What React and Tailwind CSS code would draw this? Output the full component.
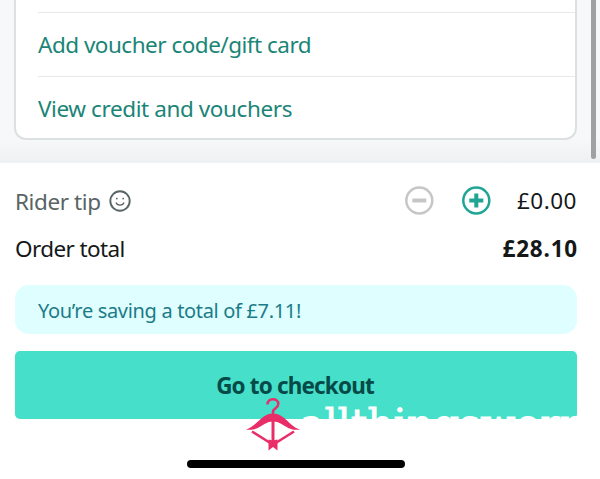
function SmileyIcon() {
  return (
    <svg width="22" height="22" viewBox="0 0 22 22" fill="none" stroke="#596465" aria-hidden="true">
      <circle cx="11" cy="11" r="9.7" strokeWidth="1.9" />
      <path d="M7 12.5c1 3.4 7 3.4 8 0" strokeWidth="1.2" />
      <circle cx="7.8" cy="8.6" r="0.9" fill="#596465" stroke="none" />
      <circle cx="14.2" cy="8.6" r="0.9" fill="#596465" stroke="none" />
    </svg>
  );
}

function StepIcon({ plus }) {
  return (
    <svg width="30" height="30" viewBox="0 0 30 30" fill="none" stroke="currentColor" aria-hidden="true">
      <circle cx="15.3" cy="14.5" r="13" strokeWidth="2.5" />
      <path d={plus ? 'M8.3 14.5h14M15.3 7.5v14' : 'M8.3 14.5h14'} strokeWidth="4" />
    </svg>
  );
}

function HangerBow() {
  return (
    <svg width="54" height="56" viewBox="0 0 54 56" fill="none" stroke="#e92d69" aria-hidden="true">
      <path d="M21.5 8.5C21.5 1.5 32.5 1.5 32.3 8c-.2 4.5-5.3 4-5.3 8v3" strokeWidth="2.5" />
      <path
        d="M0 33.5c6-1.500 11-7.500 16.500-12 6.500-5.300 14.500-5.300 21 0C43 26 48 32 54 33.500c-8 1.300-12-1.500-18.500-5.500-5.500-3.300-11.500-3.300-17 0C12 32 8 34.800 0 33.500Z"
        fill="#e92d69"
        stroke="none"
      />
      <path d="M27 24v22" strokeWidth="3" />
      <path d="M6 35.500l17.500 11M48 35.500L30.500 46.500" strokeWidth="2.600" />
      <path d="M22.500 43.500l4.500 1 4.500-1v11l-4.500-3.500-4.500 3.500Z" fill="#e92d69" stroke="none" />
    </svg>
  );
}

export default function App() {
  return (
    <div className="relative flex h-[479px] w-[600px] flex-col overflow-hidden bg-white font-['Noto_Sans',sans-serif] text-[22.5px] leading-none text-[#151818]">
      <section className="h-[163px] shrink-0 bg-linear-to-b from-[#f6f8fa] from-85% to-[#eef1f1] pr-[23px] pl-[14px]">
        <div className="h-[140px] rounded-b-[12px] border-2 border-t-0 border-[#dbe1e1] bg-white pl-[22px] text-[#1a8577]">
          <div className="h-[13px] border-b border-[#e7e9e9]" />
          <div className="flex h-16 items-center border-b border-[#e7e9e9] pt-px">
            <a className="whitespace-nowrap tracking-[-0.5px]">Add voucher code/gift card</a>
          </div>
          <div className="flex h-16 items-center pt-px">
            <a className="whitespace-nowrap tracking-[-0.4px]">View credit and vouchers</a>
          </div>
        </div>
      </section>

      <main className="flex flex-col pr-[23px] pl-[15px]">
        <div className="mt-[22px] flex h-8 items-center">
          <span className="pt-[2px] tracking-[-0.4px] text-[#596465]">Rider tip</span>
          <span className="ml-[8px]">
            <SmileyIcon />
          </span>
          <div className="ml-auto flex items-center">
            <button className="text-[#c5c6c6]" aria-label="Decrease tip">
              <StepIcon />
            </button>
            <button className="ml-[27px] text-[#20a595]" aria-label="Increase tip">
              <StepIcon plus />
            </button>
            <span className="ml-[25px] w-[61px] pt-px text-right tracking-[0.5px] whitespace-nowrap">£0.00</span>
          </div>
        </div>
        <div className="mt-[15px] flex h-8 items-center justify-between pt-[2px]">
          <span className="tracking-[-0.6px]">Order total</span>
          <strong className="-mr-px font-bold tracking-[0.8px]">£28.10</strong>
        </div>
        <div className="mt-[21px] flex h-[49px] items-center rounded-[14px] bg-[#defeff] pt-[2px] pl-[23px] text-[20px] text-[#1c7b88]">
          <span className="tracking-[-0.33px] whitespace-nowrap">You’re saving a total of £7.11!</span>
        </div>
        <button className="mt-[17px] flex h-[68px] items-center justify-center rounded-[5px] bg-[#45dfca] pt-[2px] pr-[2px] font-bold tracking-[-0.85px] text-[#064a47]">
          <span>Go to checkout</span>
        </button>
      </main>

      <div className="mx-auto mt-[41px] h-[8px] w-[218px] translate-x-[-4px] rounded-full bg-black" />
      <div className="absolute top-0 left-[591px] h-[159px] w-[5px] rounded-b-full bg-[#a0a2a2]" />
      <div className="absolute top-[396px] left-[246px]">
        <HangerBow />
      </div>
      <span className="absolute top-[404px] left-[300px] font-['DejaVu_Serif',serif] text-[41px] whitespace-nowrap text-white [-webkit-text-stroke:0.8px_white]">
        allthingsworn
      </span>
    </div>
  );
}
